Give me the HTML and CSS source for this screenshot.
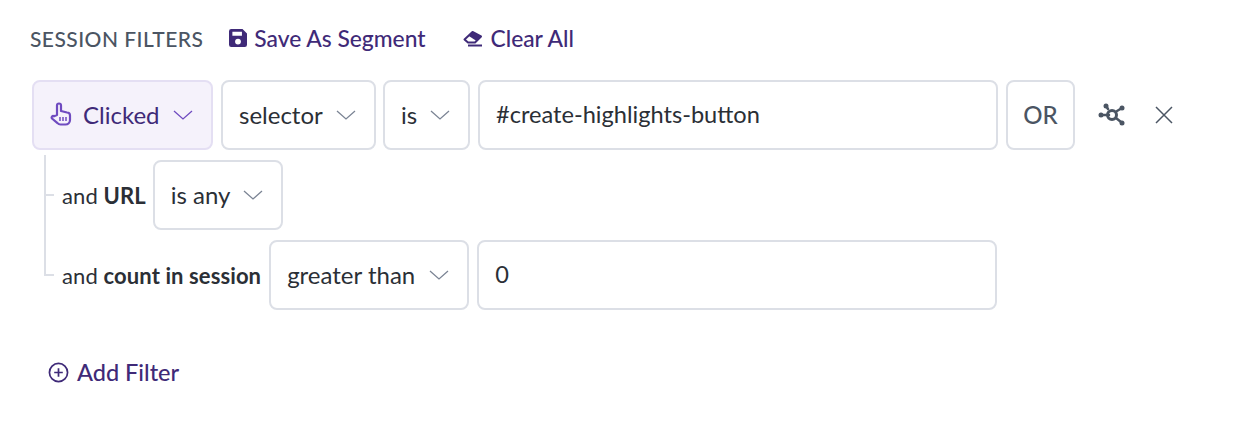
FILE: index.html
```html
<!DOCTYPE html>
<html lang="en">
<head>
  <meta charset="UTF-8">
  <title>Session Filters</title>
  <link rel="stylesheet" href="styles.css">
</head>
<body>
  <div class="filters">
    <div class="toolbar">
      <span class="toolbar-title">SESSION FILTERS</span>
      <a class="link save-link" href="#">
        <svg class="link-icon" viewBox="1 1 16 16" width="18" height="18">
          <path fill="#3f2a78" fill-rule="evenodd" d="M3 1h10l4 4v10a2 2 0 0 1-2 2H3a2 2 0 0 1-2-2V3a2 2 0 0 1 2-2zm1 2.5v3.600h8.500V3.500zM9 9.600a2.600 2.600 0 1 0 0 5.200 2.600 2.600 0 0 0 0-5.200z"/>
        </svg>
        Save As Segment
      </a>
      <a class="link clear-link" href="#">
        <svg class="clear-icon" viewBox="0 0 20 18" width="20" height="18">
          <path fill="none" stroke="#3f2a78" stroke-width="2" stroke-linejoin="round" d="M1.500 10.500 9.500 3 18 7.500 12 13.500H5z"/>
          <path fill="#3f2a78" d="M9.500 3 18 7.500 13.500 12 5.500 6.800z"/>
          <path fill="none" stroke="#3f2a78" stroke-width="2" d="M5 16.500h14"/>
        </svg>
        Clear All
      </a>
    </div>

    <div class="row">
      <div class="box box-action">
        <svg class="hand" viewBox="0 0 22 24" width="22" height="24">
          <path fill="none" stroke="#6f4bc0" stroke-width="2.200" stroke-linejoin="round" d="M7 13V3.500a2 2 0 0 1 4 0V9l6 1.500a3 3 0 0 1 3 3V18a4.500 4.500 0 0 1-4.500 4.500h-5a4 4 0 0 1-3-1.400L2 16.500c-1-1.300.6-3.200 2-2.200z"/>
          <path fill="none" stroke="#6f4bc0" stroke-width="1.500" d="M10 15v4M13 15v4M16 15v4"/>
        </svg>
        <span>Clicked</span>
        <svg class="chevron chevron-purple" viewBox="0 0 20 10" width="20" height="10"><path d="M1 1l9 8 9-8"/></svg>
      </div>
      <div class="box box-select selector-box">
        <span>selector</span>
        <svg class="chevron" viewBox="0 0 20 10" width="20" height="10"><path d="M1 1l9 8 9-8"/></svg>
      </div>
      <div class="box box-select is-box">
        <span>is</span>
        <svg class="chevron" viewBox="0 0 20 10" width="20" height="10"><path d="M1 1l9 8 9-8"/></svg>
      </div>
      <div class="box box-input">#create-highlights-button</div>
      <div class="box box-or">OR</div>
      <svg class="graph-icon" viewBox="0 0 30 24" width="30" height="24">
        <g stroke="#4b5563" stroke-width="2.500" stroke-linecap="round">
          <path d="M3 12h8M10 6 8 3M19 8l5-3M18 15l5 4"/>
        </g>
        <circle cx="14" cy="12" r="4.500" fill="none" stroke="#4b5563" stroke-width="3"/>
        <circle cx="3" cy="12" r="2.500" fill="#4b5563"/>
        <circle cx="8" cy="3" r="2.500" fill="#4b5563"/>
        <circle cx="24" cy="5" r="2.500" fill="#4b5563"/>
        <circle cx="24" cy="20" r="2.500" fill="#4b5563"/>
      </svg>
      <svg class="close-icon" viewBox="0 0 18 18" width="18" height="18">
        <path stroke="#4b5563" stroke-width="1.500" d="M1 1l16 16M17 1 1 17"/>
      </svg>
    </div>

    <div class="sub-rows">
      <div class="row sub-row">
        <span class="sub-label">and <b>URL</b></span>
        <div class="box box-select any-box">
          <span>is any</span>
          <svg class="chevron" viewBox="0 0 20 10" width="20" height="10"><path d="M1 1l9 8 9-8"/></svg>
        </div>
      </div>
      <div class="row sub-row">
        <span class="sub-label">and <b>count in session</b></span>
        <div class="box box-select greater-box">
          <span>greater than</span>
          <svg class="chevron" viewBox="0 0 20 10" width="20" height="10"><path d="M1 1l9 8 9-8"/></svg>
        </div>
        <div class="box box-input">0</div>
      </div>
    </div>

    <a class="link add-link" href="#">
      <svg class="add-icon" viewBox="0 0 22 22" width="21" height="21">
        <circle cx="11" cy="11" r="9.500" fill="none" stroke="#3f2a78" stroke-width="1.800"/>
        <path stroke="#3f2a78" stroke-width="1.800" d="M11 6.500v9M6.500 11h9"/>
      </svg>
      Add Filter
    </a>
  </div>
</body>
</html>
```

FILE: styles.css
```css
body {
  font-family: "Lato", "Liberation Sans", sans-serif;
  margin: 0;
  background-color: #fff;
  color: #2b2f36;
}

.filters {
  padding: 23px 0 0 30px;
}

.toolbar {
  display: flex;
  align-items: center;
  height: 30px;
}

.toolbar-title {
  font-size: 21px;
  letter-spacing: 0.45px;
  font-weight: 500;
  color: #4b5563;
  margin-right: 26px;
}

.link {
  display: inline-flex;
  align-items: center;
  font-size: 22.800px;
  font-weight: 500;
  color: #3f2a78;
  text-decoration: none;
}

.link-icon {
  margin-right: 7px;
}

.clear-icon {
  margin-right: 8px;
}

.add-icon {
  margin: 1px 8px 0 0;
}

.clear-link {
  margin-left: 37px;
}

.row {
  display: flex;
  align-items: center;
  height: 70px;
  gap: 8px;
}

.toolbar + .row {
  margin: 27px 0 10px 2px;
}

.box {
  box-sizing: border-box;
  display: flex;
  align-items: center;
  height: 70px;
  border: 2px solid #dcdfe6;
  border-radius: 8px;
  font-size: 24px;
  padding: 0 18px 2px 16px;
}

.box-action {
  width: 181px;
  background-color: #f5f2fb;
  border-color: #e4dff3;
  color: #3f2a78;
}

.hand {
  margin-right: 11px;
}

.chevron {
  fill: none;
  stroke: #7b8494;
  stroke-width: 1.300;
  margin: 2px 0 0 auto;
}

.chevron-purple {
  stroke: #6f4bc0;
}

.selector-box {
  width: 155px;
}

.is-box {
  width: 87px;
  margin-left: -1px;
}

.box-input {
  width: 520px;
  font-size: 23.600px;
}

.box-or {
  width: 69px;
  justify-content: center;
  padding: 0 0 2px;
  font-weight: 500;
  color: #4b5563;
}

.graph-icon {
  margin-left: 15px;
}

.close-icon {
  margin-left: 19px;
}

.sub-rows {
  position: relative;
  margin-left: 2px;
  padding-left: 30px;
}

.sub-rows::before {
  content: "";
  position: absolute;
  left: 12px;
  top: -5px;
  bottom: 34px;
  width: 10px;
  border-left: 2px solid #dcdfe6;
  border-bottom: 2px solid #dcdfe6;
  box-sizing: border-box;
}

.sub-row {
  position: relative;
  margin-bottom: 10px;
}

.sub-row:first-child::before {
  content: "";
  position: absolute;
  left: -18px;
  top: 34px;
  width: 10px;
  height: 2px;
  background-color: #dcdfe6;
}

.sub-label {
  font-size: 22px;
  letter-spacing: 0.1px;
}

.sub-label b {
  font-weight: 700;
}

.any-box {
  width: 130px;
  margin-left: -1px;
}

.greater-box {
  width: 200px;
}

.add-link {
  font-size: 23.500px;
  margin: 38px 0 0 18px;
}
```
